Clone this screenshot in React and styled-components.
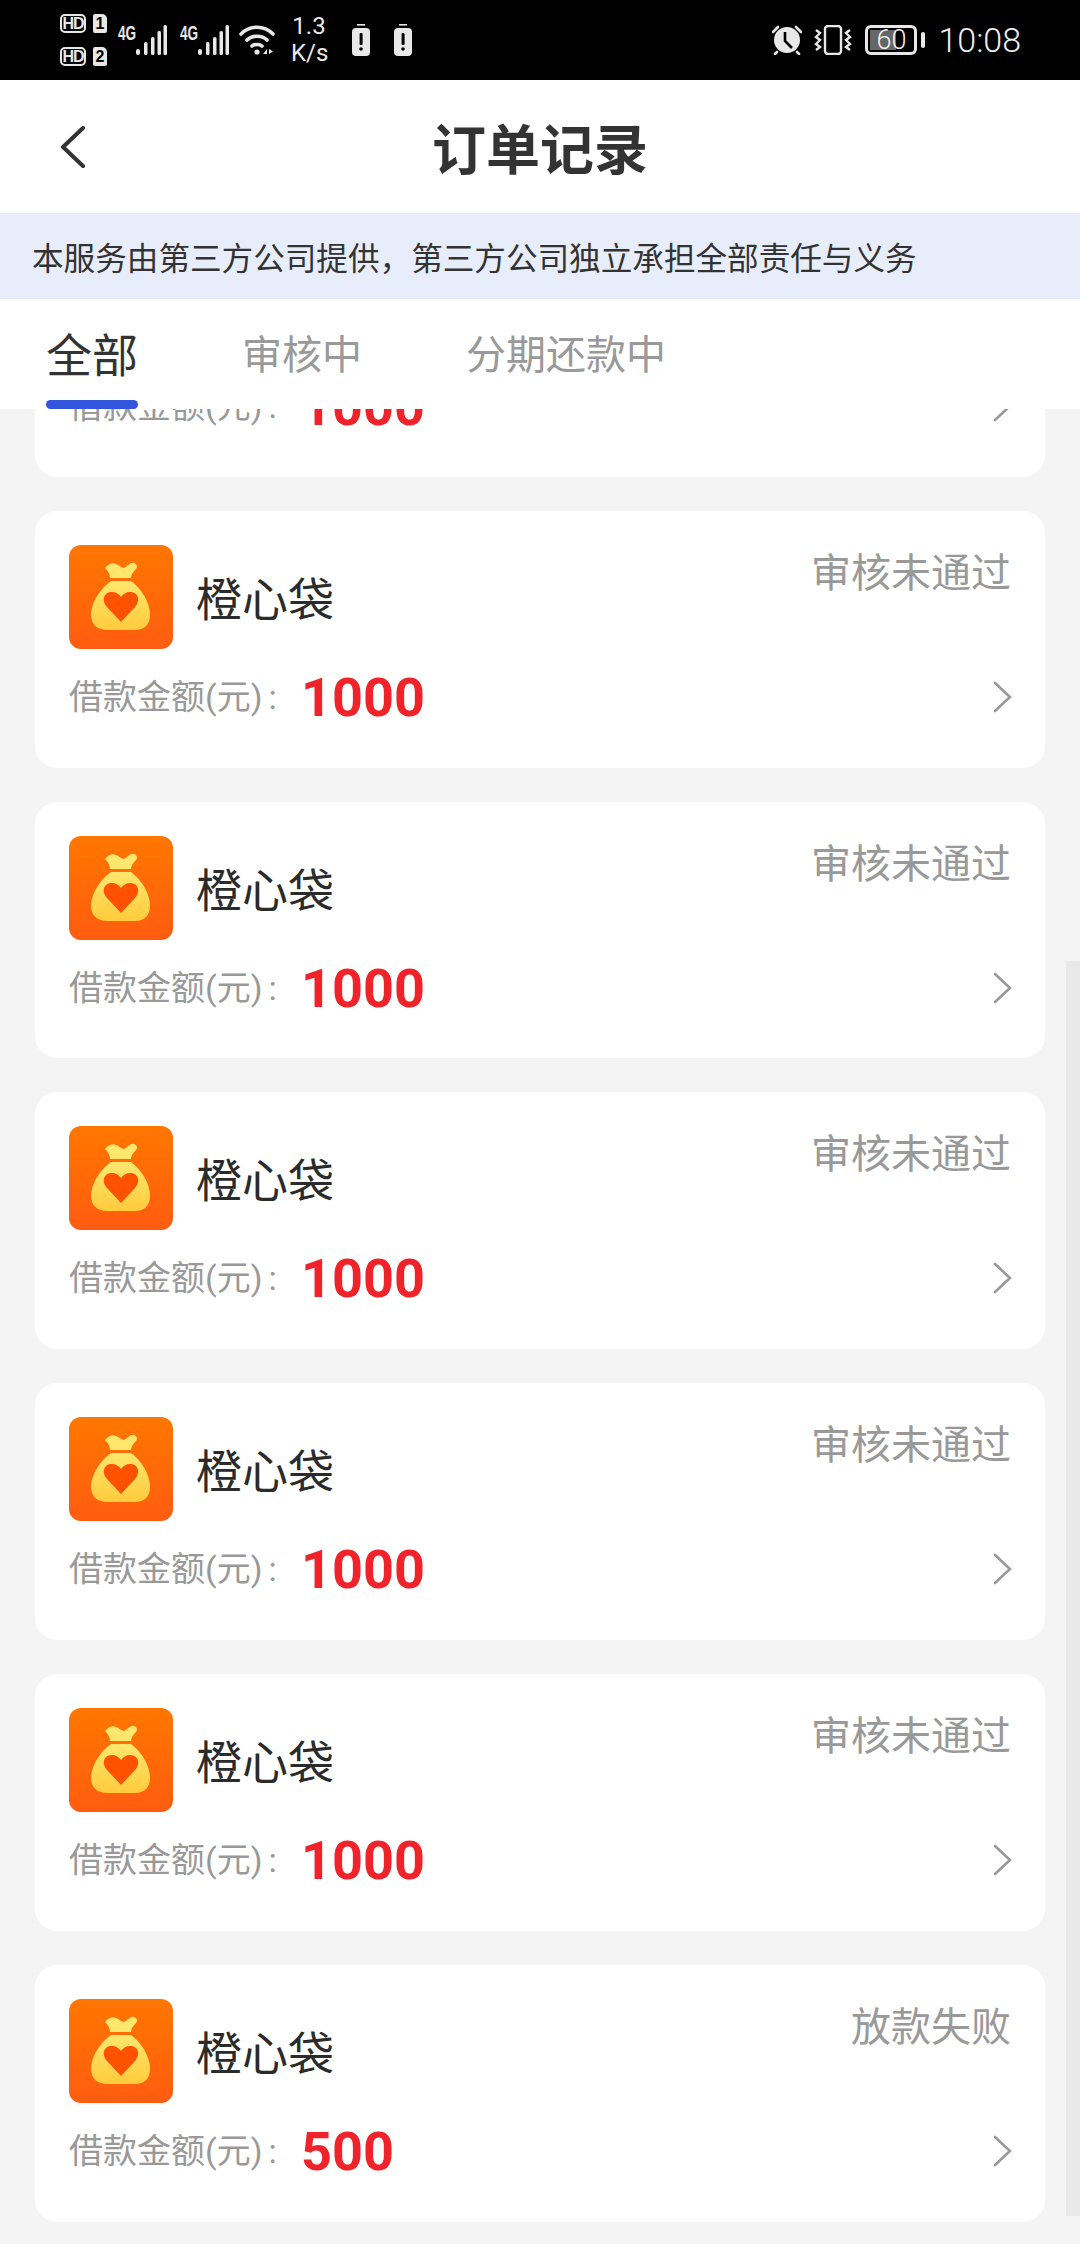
import styled, { createGlobalStyle } from 'styled-components';

const orders = [
  { id: 1, status: '审核未通过', amount: 1000 },
  { id: 2, status: '审核未通过', amount: 1000 },
  { id: 3, status: '审核未通过', amount: 1000 },
  { id: 4, status: '审核未通过', amount: 1000 },
  { id: 5, status: '审核未通过', amount: 1000 },
  { id: 6, status: '审核未通过', amount: 1000 },
  { id: 7, status: '放款失败', amount: 500 },
];

const GlobalStyle = createGlobalStyle`
  html, body {
    margin: 0;
    padding: 0;
    background: #f4f4f4;
  }
  body {
    font-family: Roboto, "Noto Sans CJK SC", sans-serif;
    overflow: hidden;
  }
`;

const Page = styled.div`
  width: 1080px;
  height: 2244px;
  display: flex;
  flex-direction: column;
  background: #f4f4f4;
  overflow: hidden;
`;

const StatusBar = styled.div`
  height: 80px;
  flex: none;
  background: #000;
  color: #e8e8e8;
  display: flex;
  align-items: center;
  justify-content: space-between;
  padding: 0 59px 0 60px;
`;

const StatusGroup = styled.div`
  display: flex;
  align-items: center;
`;

const SimStack = styled.div`
  display: flex;
  flex-direction: column;
  gap: 14px;
  margin-right: 11px;
`;

const SimRow = styled.div`
  display: flex;
  align-items: center;
  gap: 7px;
`;

const HdBadge = styled.span`
  box-sizing: border-box;
  width: 26px;
  height: 19px;
  border: 2px solid #e8e8e8;
  border-radius: 5px;
  font: 700 16px/15px "Liberation Sans", sans-serif;
  text-align: center;
  letter-spacing: -1px;
`;

const SimNumber = styled.span`
  width: 14px;
  height: 19px;
  background: #e8e8e8;
  color: #000;
  border-radius: 2px 5px 2px 2px;
  font: 700 16px/19px "Liberation Sans", sans-serif;
  text-align: center;
`;

const Network = styled.div`
  display: flex;
  align-items: flex-start;
  height: 30px;
  margin-right: 13px;
`;

const NetworkLabel = styled.span`
  width: 18px;
  font: 700 20px/16px "Liberation Sans", sans-serif;
  white-space: nowrap;
  transform: scaleX(0.68);
  transform-origin: left;
`;

const Wifi = styled.svg`
  margin-left: -3px;
`;

const Speed = styled.div`
  width: 36px;
  margin: 0 25px 0 16px;
  font: 400 24px/27px Roboto, sans-serif;
  text-align: center;
`;

const AlertGroup = styled.div`
  display: flex;
  gap: 24px;
`;

const Alarm = styled.svg`
  margin-right: 12px;
`;

const Vibrate = styled.svg`
  margin-right: 13px;
`;

const Battery = styled.div`
  display: flex;
  align-items: center;
  gap: 4px;
  margin-right: 13px;
`;

const BatteryBody = styled.div`
  box-sizing: border-box;
  position: relative;
  width: 52px;
  height: 30px;
  border: 3px solid #e8e8e8;
  border-radius: 6px;
  padding: 2px;
  display: flex;
`;

const BatteryFill = styled.div`
  height: 100%;
  width: ${(p) => p.$level}%;
  background: #666;
`;

const BatteryText = styled.span`
  position: absolute;
  inset: 0;
  text-align: center;
  color: #f2f2f2;
  font: 300 27px/25px Roboto, sans-serif;
`;

const BatteryTip = styled.div`
  width: 4px;
  height: 16px;
  border-radius: 2px;
  background: #e8e8e8;
`;

const Clock = styled.span`
  font: 300 34px/40px Roboto, sans-serif;
  color: #eee;
`;

const NavBar = styled.div`
  flex: none;
  height: 133px;
  background: #fff;
  display: grid;
  grid-template-columns: 1fr auto 1fr;
  align-items: center;
  padding-left: 60px;
  padding-right: 60px;
`;

const Title = styled.h1`
  margin: 0;
  font: 700 54px/64px "Noto Sans CJK SC", sans-serif;
  color: #333;
`;

const Notice = styled.div`
  flex: none;
  height: 86px;
  box-sizing: border-box;
  padding-left: 32px;
  background: #e8edfb;
  color: #333;
  font: 400 31.6px/86px "Noto Sans CJK SC", sans-serif;
`;

const Tabs = styled.div`
  flex: none;
  position: relative;
  z-index: 1;
  height: 110px;
  box-sizing: border-box;
  padding: 20px 0 0 46px;
  background: #fff;
  display: flex;
  align-items: flex-start;
  gap: 104px;
`;

const Tab = styled.div`
  position: relative;
  height: 90px;
  font: 400 ${(p) => (p.$active ? 46 : 40)}px/66px "Noto Sans CJK SC", sans-serif;
  color: ${(p) => (p.$active ? '#333' : '#999')};

  ${(p) =>
    p.$active &&
    `&::after {
      content: '';
      position: absolute;
      left: 0;
      right: 0;
      bottom: 0;
      height: 9px;
      border-radius: 5px;
      background: #3355dd;
    }`}
`;

const ScrollArea = styled.div`
  flex: 1;
  position: relative;
  overflow: hidden;
`;

const CardList = styled.div`
  display: flex;
  flex-direction: column;
  gap: 34px;
  margin-top: -189px;
  padding: 0 35px;
`;

const Scrollbar = styled.div`
  position: absolute;
  top: 552px;
  bottom: 28px;
  right: 0;
  width: 14px;
  background: #e9e9e9;
`;

const Card = styled.div`
  box-sizing: border-box;
  height: 256.8px;
  padding: 34px 34px 0;
  background: #fff;
  border-radius: 22px;
`;

const CardHead = styled.div`
  display: flex;
  align-items: center;
`;

const AppIcon = styled.svg`
  flex: none;
  margin-right: 23px;
  border-radius: 12px;
`;

const AppName = styled.span`
  margin-top: -2px;
  font: 400 46px/60px "Noto Sans CJK SC", sans-serif;
  color: #2b2b2b;
`;

const Status = styled.span`
  margin-left: auto;
  margin-top: -3px;
  align-self: flex-start;
  font: 400 40px/56px "Noto Sans CJK SC", sans-serif;
  color: #999;
`;

const AmountRow = styled.div`
  display: flex;
  align-items: center;
  height: 60px;
  margin-top: 18px;
`;

const AmountLabel = styled.span`
  width: 232px;
  font: 400 34px/60px Roboto, "Noto Sans CJK SC", sans-serif;
  color: #999;
`;

const LabelColon = styled.span`
  margin-left: 6px;
`;

const AmountValue = styled.span`
  margin-top: 2px;
  font: 700 54px/60px Roboto, sans-serif;
  color: #f0222a;
`;

const Chevron = styled.svg`
  margin-left: auto;
  margin-right: -1px;
`;

const Bars = () => (
  <svg width="31" height="30" viewBox="0 0 31 30" fill="#e8e8e8">
    <rect x="0" y="24" width="4" height="6" rx="2" />
    <rect x="8" y="17" width="3.5" height="13" rx="1.5" />
    <rect x="15" y="12" width="3.5" height="18" rx="1.5" />
    <rect x="21.5" y="6" width="3.5" height="24" rx="1.5" />
    <rect x="27.5" y="0" width="3.5" height="30" rx="1.5" />
  </svg>
);

const WifiIcon = () => (
  <Wifi width="36" height="30" viewBox="0 0 36 30" fill="none" stroke="#e8e8e8" strokeWidth="3.6" strokeLinecap="round">
    <path d="M2 9C11 0 25 0 34 9" />
    <path d="M8 15C13 10 23 10 28 15" />
    <path d="M13 21C15 19 21 19 23 21" />
    <circle cx="18" cy="27" r="2.6" fill="#e8e8e8" stroke="none" />
    <path d="M24 29l4-5v5zM30 24l4 2.5-4 2.5z" fill="#e8e8e8" stroke="none" />
  </Wifi>
);

const BatteryAlert = () => (
  <svg width="18" height="32" viewBox="0 0 18 32">
    <rect x="5" y="0" width="8" height="1.6" fill="#e8e8e8" />
    <rect x="0" y="4" width="18" height="28" rx="4" fill="#e8e8e8" />
    <rect x="7.6" y="9" width="3" height="12" rx="1" fill="#000" />
    <circle cx="9" cy="25" r="1.8" fill="#000" />
  </svg>
);

const AlarmIcon = () => (
  <Alarm width="30" height="30" viewBox="0 0 30 30">
    <circle cx="15" cy="15" r="13" fill="#e8e8e8" />
    <path d="M1 7L6 2M29 7L24 2M5 27L3 29M25 27L27 29" stroke="#e8e8e8" strokeWidth="2.6" strokeLinecap="round" />
    <path d="M13 7V16L20 23" fill="none" stroke="#000" strokeWidth="2.6" />
  </Alarm>
);

const VibrateIcon = () => (
  <Vibrate width="38" height="30" viewBox="0 0 38 30" fill="none" stroke="#e8e8e8">
    <rect x="11" y="1" width="16" height="28" rx="3" strokeWidth="2.4" />
    <path d="M2 5L6 8L2 12L6 15L2 19L6 22L2 25" strokeWidth="2.4" />
    <path d="M36 5L32 8L36 12L32 15L36 19L32 22L36 25" strokeWidth="2.4" />
  </Vibrate>
);

const BagIcon = () => (
  <AppIcon width="104" height="104" viewBox="0 0 104 104">
    <defs>
      <linearGradient id="tile" x1="0" y1="0" x2="0" y2="1">
        <stop offset="0" stopColor="#ff7700" />
        <stop offset="1" stopColor="#ff5c10" />
      </linearGradient>
      <linearGradient id="bag" x1="0" y1="0" x2="0" y2="1">
        <stop offset="0" stopColor="#ffe76e" />
        <stop offset="1" stopColor="#ffcb3c" />
      </linearGradient>
    </defs>
    <rect width="104" height="104" fill="url(#tile)" />
    <path d="M36 23C39 19 44 17 47 19C50 20 53 23 55 23C58 22 61 17 65 18C68 19 69 22 67 24C64 27 62 30 62 33H41C41 29 39 26 36 23Z" fill="#ffe76e" />
    <path d="M42 36H62C72 43 81 57 81 70C81 80 75 85 66 85H38C29 85 22 80 22 70C22 57 32 43 42 36Z" fill="url(#bag)" />
    <path d="M52 77L38 62C32 55 35 47 43 47C47 47 50 49 52 52C54 49 57 47 61 47C69 47 72 55 66 62Z" fill="#ff5200" />
  </AppIcon>
);

const OrderCard = ({ status, amount }) => (
  <Card>
    <CardHead>
      <BagIcon />
      <AppName>橙心袋</AppName>
      <Status>{status}</Status>
    </CardHead>
    <AmountRow>
      <AmountLabel>
        借款金额(元)<LabelColon>:</LabelColon>
      </AmountLabel>
      <AmountValue>{amount}</AmountValue>
      <Chevron width="20" height="32" viewBox="0 0 20 32" fill="none" stroke="#999" strokeWidth="2.6" strokeLinecap="round">
        <path d="M3 2L18 16L3 30" />
      </Chevron>
    </AmountRow>
  </Card>
);

const App = () => (
  <Page>
    <GlobalStyle />
    <StatusBar>
      <StatusGroup>
        <SimStack>
          <SimRow>
            <HdBadge>HD</HdBadge>
            <SimNumber>1</SimNumber>
          </SimRow>
          <SimRow>
            <HdBadge>HD</HdBadge>
            <SimNumber>2</SimNumber>
          </SimRow>
        </SimStack>
        <Network>
          <NetworkLabel>4G</NetworkLabel>
          <Bars />
        </Network>
        <Network>
          <NetworkLabel>4G</NetworkLabel>
          <Bars />
        </Network>
        <WifiIcon />
        <Speed>
          1.3
          <br />
          K/s
        </Speed>
        <AlertGroup>
          <BatteryAlert />
          <BatteryAlert />
        </AlertGroup>
      </StatusGroup>
      <StatusGroup>
        <AlarmIcon />
        <VibrateIcon />
        <Battery>
          <BatteryBody>
            <BatteryFill $level={60} />
            <BatteryText>60</BatteryText>
          </BatteryBody>
          <BatteryTip />
        </Battery>
        <Clock>10:08</Clock>
      </StatusGroup>
    </StatusBar>
    <NavBar>
      <svg width="26" height="42" viewBox="0 0 26 42" fill="none" stroke="#333" strokeWidth="4" strokeLinecap="round" strokeLinejoin="round">
        <path d="M23 2L3 21L23 40" />
      </svg>
      <Title>订单记录</Title>
    </NavBar>
    <Notice>本服务由第三方公司提供，第三方公司独立承担全部责任与义务</Notice>
    <Tabs>
      <Tab $active>全部</Tab>
      <Tab>审核中</Tab>
      <Tab>分期还款中</Tab>
    </Tabs>
    <ScrollArea>
      <CardList>
        {orders.map((o) => (
          <OrderCard key={o.id} status={o.status} amount={o.amount} />
        ))}
      </CardList>
      <Scrollbar />
    </ScrollArea>
  </Page>
);

export default App;
